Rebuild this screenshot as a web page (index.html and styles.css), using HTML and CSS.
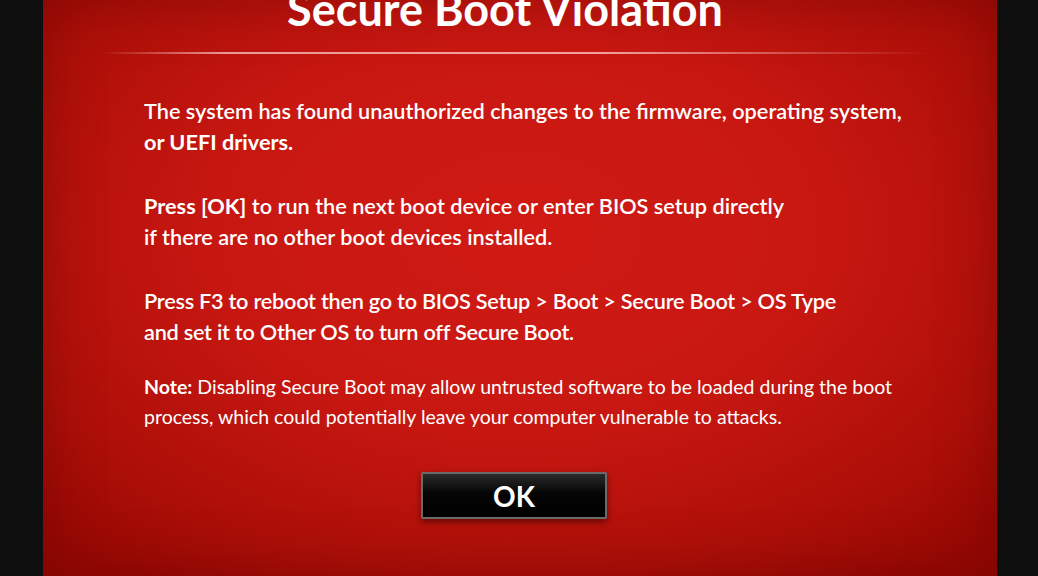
FILE: index.html
```html
<!DOCTYPE html>
<html lang="en">

<head>
    <meta charset="UTF-8">
    <meta name="viewport" content="width=device-width, initial-scale=1.0">
    <title>Secure Boot Violation</title>
    <link rel="stylesheet" href="styles.css">
</head>

<body>
    <div class="screen">
        <div class="panel">
            <h1>Secure Boot Violation</h1>
            <div class="divider"></div>

            <div class="message">
                <p>The system has found unauthorized changes to the firmware, operating system,<br>
                    <b>or UEFI drivers.</b></p>

                <p><b>Press [OK]</b> to run the next boot device or enter BIOS setup directly<br>
                    if there are no other boot devices installed.</p>

                <p class="tight">Press F3 to reboot then go to BIOS Setup &gt; Boot &gt; Secure Boot &gt; OS Type<br>
                    and set it to Other OS to turn off Secure Boot.</p>

                <p class="note"><b>Note:</b> Disabling Secure Boot may allow untrusted software to be loaded during the boot<br>
                    process, which could potentially leave your computer vulnerable to attacks.</p>
            </div>

            <div class="buttons">
                <button class="button">OK</button>
            </div>
        </div>
    </div>
</body>

</html>
```

FILE: styles.css
```css
body {
    margin: 0;
    background-color: #0f0f0f;
    color: #ffffff;
    font-family: 'Lato', 'Liberation Sans', sans-serif;
    overflow: hidden;
}

.screen {
    height: 576px;
    padding: 0 41px 0 43px;
}

.panel {
    height: 100%;
    background: radial-gradient(ellipse 70% 75% at 50% 40%, #d01a14 0%, #c81711 45%, #ad0f08 80%, #980803 100%);
    box-shadow: inset 0 0 60px rgba(80, 0, 0, 0.35);
    overflow: hidden;
}

h1 {
    margin: -17px 0 0;
    font-size: 45px;
    font-weight: 700;
    line-height: 52px;
    text-align: center;
    padding-right: 30px;
}

.divider {
    height: 2px;
    margin: 17px 66px 0 58px;
    background: linear-gradient(to right, rgba(255, 255, 255, 0), rgba(255, 210, 210, 0.7) 15%, rgba(255, 210, 210, 0.75) 60%, rgba(255, 255, 255, 0));
}

.message {
    padding: 42px 0 0 101px;
}

p {
    margin: 0 0 33px;
    font-size: 21.7px;
    font-weight: 600;
    line-height: 31px;
}

p b {
    font-weight: 700;
}

.tight {
    letter-spacing: -0.25px;
}

.note {
    margin-top: -9px;
    font-size: 19.5px;
    font-weight: 400;
    line-height: 30px;
}

.buttons {
    text-align: center;
    padding: 7px 12px 0 0;
}

.button {
    width: 186px;
    height: 47px;
    background: linear-gradient(#2a2a2a, #050505 45%, #000 100%);
    border: 2px solid #6a6a6a;
    border-radius: 2px;
    box-shadow: 0 3px 6px rgba(0, 0, 0, 0.45);
    color: #ffffff;
    font-family: 'Lato', 'Liberation Sans', sans-serif;
    font-size: 28px;
    font-weight: 700;
    cursor: pointer;
}
```
